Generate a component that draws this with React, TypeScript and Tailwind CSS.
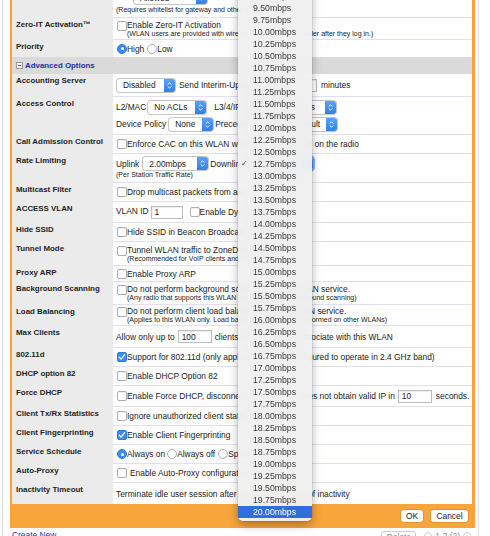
import React from "react";

function Check({ on = false, className = "" }: { on?: boolean; className?: string }) {
  if (on)
    return (
      <span
        className={
          "inline-flex h-[10px] w-[10px] shrink-0 items-center justify-center rounded-[2px] border border-[#2d7be6] bg-[#3a8df3] " +
          className
        }
      >
        <svg width="8" height="8" viewBox="0 0 8 8">
          <path d="M1.3 4.3 L3.1 6.1 L6.7 1.7" fill="none" stroke="#fff" strokeWidth="1.3" strokeLinecap="round" strokeLinejoin="round" />
        </svg>
      </span>
    );
  return (
    <span
      className={
        "inline-block h-[10px] w-[10px] shrink-0 rounded-[2px] border border-[#adadad] bg-white shadow-[inset_0_1px_1px_rgba(0,0,0,0.06)] " +
        className
      }
    />
  );
}

function Radio({ on = false, className = "" }: { on?: boolean; className?: string }) {
  if (on)
    return (
      <span
        className={
          "inline-flex h-[10px] w-[10px] shrink-0 items-center justify-center rounded-full border border-[#2d7be6] bg-[#3a8df3] " +
          className
        }
      >
        <span className="h-[3px] w-[3px] rounded-full bg-white" />
      </span>
    );
  return <span className={"inline-block h-[10px] w-[10px] shrink-0 rounded-full border border-[#adadad] bg-white " + className} />;
}

function Select({ label, className = "", focus = false }: { label: string; className?: string; focus?: boolean }) {
  return (
    <span
      className={
        "inline-flex h-[13px] shrink-0 items-stretch overflow-hidden rounded-[3px] bg-white shadow-[0_0_0_1px_#c6c6c6,0_1px_1px_rgba(0,0,0,0.1)] " +
        (focus ? "ring-2 ring-[#7fb0f3] " : "") +
        className
      }
    >
      <span className="flex flex-1 items-center whitespace-nowrap pl-[6px] leading-[10px]">{label}</span>
      <span className="flex w-[11px] items-center justify-center bg-gradient-to-b from-[#5aa2f6] to-[#2f7fec]">
        <svg width="5" height="9" viewBox="0 0 5 9">
          <path
            d="M1 3.3 L2.5 1.8 L4 3.3 M1 5.7 L2.5 7.2 L4 5.7"
            fill="none"
            stroke="#fff"
            strokeWidth="0.9"
            strokeLinecap="round"
            strokeLinejoin="round"
          />
        </svg>
      </span>
    </span>
  );
}

function Input({ value = "", className = "" }: { value?: string; className?: string }) {
  return (
    <span
      className={
        "inline-flex h-[13px] shrink-0 items-center border border-[#bdbdbd] bg-white pl-[3px] leading-[10px] shadow-[inset_0_1px_1px_rgba(0,0,0,0.08)] " +
        className
      }
    >
      {value}
    </span>
  );
}

function Row({ label, h, children, last = false }: { label: string; h: string; children: React.ReactNode; last?: boolean }) {
  return (
    <div className={"flex " + h}>
      <div className="w-[101px] shrink-0 whitespace-nowrap bg-[#ebebeb] pl-[4px] pt-[2px] text-[7.9px] font-bold leading-[10px] text-[#1e1e1e]">
        {label}
      </div>
      <div
        className={
          "flex min-w-0 flex-1 flex-col justify-center overflow-hidden bg-white pl-[3px] " + (last ? "" : "border-b border-[#e4def5]")
        }
      >
        {children}
      </div>
    </div>
  );
}

function CheckLine({ on = false, text, sub, gap = false }: { on?: boolean; text: string; sub?: string; gap?: boolean }) {
  return (
    <div className="flex items-start whitespace-nowrap">
      <Check on={on} className={sub ? "ml-px mt-[1px]" : "ml-px"} />
      <div className={gap ? "ml-[3px]" : ""}>
        <div className="leading-[10px]">{text}</div>
        {sub && <div className="text-[7px] leading-[8px]">{sub}</div>}
      </div>
    </div>
  );
}

const LINE = "flex items-center whitespace-nowrap leading-[10px]";

function Menu() {
  const items: string[] = [];
  for (let i = 0; i <= 44; i++) items.push((9 + i * 0.25).toFixed(2) + "mbps");
  return (
    <div className="absolute left-[238px] top-[-24px] w-[74px] rounded-b-[5px] bg-[#efefef]/95 pb-[3px] pt-[2px] font-['Liberation_Sans',Arial,sans-serif] shadow-[0_4px_10px_rgba(0,0,0,0.3),0_0_0_0.5px_rgba(0,0,0,0.12)] backdrop-blur-[10px]">
      {items.map((t) => {
        const sel = t === "20.00mbps";
        return (
          <div
            key={t}
            className={
              "flex h-[12px] items-center pl-[3px] text-[8.7px] leading-[12px] " +
              (sel ? "bg-[#2f6fdd] text-white" : "text-[#3a3a3a]")
            }
          >
            <span className="w-[12px] text-[8px] leading-[12px] text-[#444] font-['DejaVu_Sans',sans-serif]">
              {t === "12.75mbps" ? "✓" : ""}
            </span>
            <span>{t}</span>
          </div>
        );
      })}
    </div>
  );
}

export default function App() {
  return (
    <div className="relative h-[536px] w-[490px] overflow-hidden bg-white font-['Liberation_Sans',Arial,sans-serif] text-[8.4px] text-[#1a1a1a]">
      <div className="flex h-full">
        <div className="w-[2px]" />
        <div className="w-px bg-[#dcdcdc]" />
        <div className="w-[7px]" />
        <div className="flex w-[465px] flex-col">
          <div className="-mt-[12px] border-l-2 border-r-[3px] border-[#f8a53b] bg-white">
            <Row label="" h="h-[30px]">
              <div className={LINE + " pl-[18px]"}>
                <Select label="Allowed" className="w-[73px]" />
              </div>
              <div className="mt-[2px] whitespace-nowrap text-[7px] leading-[8px]">(Requires whitelist for gateway and other nodes)</div>
            </Row>
            <Row label="Zero-IT Activation™" h="h-[22px]">
              <CheckLine
                text="Enable Zero-IT Activation"
                sub="(WLAN users are provided with wireless configuration installer after they log in.)"
              />
            </Row>
            <Row label="Priority" h="h-[17px]" last>
              <div className={LINE}>
                <Radio on className="ml-px" />
                <span>High</span>
                <Radio className="ml-[3px]" />
                <span>Low</span>
              </div>
            </Row>
            <div className="flex h-[17px] items-center bg-[#dadada] pl-[4px]">
              <span className="flex h-[7px] w-[7px] items-center justify-center border border-[#9a9a9a] bg-[#f2f2f2]">
                <span className="h-px w-[3px] bg-[#555]" />
              </span>
              <span className="ml-[2px] text-[7.9px] font-bold leading-[10px] text-[#1f2d9c]">Advanced Options</span>
            </div>
            <Row label="Accounting Server" h="h-[23px]">
              <div className={LINE}>
                <Select label="Disabled" className="ml-px w-[58px]" />
                <span className="ml-[4px]">Send Interim-Update every</span>
                <Input value="5" className="ml-[3px] w-[35px]" />
                <span className="ml-[4px]">minutes</span>
              </div>
            </Row>
            <Row label="Access Control" h="h-[38px]">
              <div className={LINE}>
                <span>L2/MAC</span>
                <Select label="No ACLs" className="ml-[2px] w-[58px]" />
                <span className="ml-[8px]">L3/4/IP address</span>
                <Select label="No ACLs" className="ml-[3px] w-[60px]" />
              </div>
              <div className={LINE + " mt-[4px]"}>
                <span>Device Policy</span>
                <Select label="None" className="ml-[3px] w-[44px]" />
                <span className="ml-[2px]">Precedence Policy</span>
                <Select label="Default" className="ml-[3px] w-[49px]" />
              </div>
            </Row>
            <Row label="Call Admission Control" h="h-[19px]">
              <CheckLine text="Enforce CAC on this WLAN when CAC is enabled on the radio" />
            </Row>
            <Row label="Rate Limiting" h="h-[29px]">
              <div className={LINE}>
                <span>Uplink</span>
                <Select label="2.00mbps" className="ml-[4px] w-[65px]" />
                <span className="ml-[2px]">Downlink</span>
                <Select label="12.75mbps" focus className="ml-[3px] w-[66px]" />
              </div>
              <div className="mt-[1px] whitespace-nowrap text-[7px] leading-[8px]">(Per Station Traffic Rate)</div>
            </Row>
            <Row label="Multicast Filter" h="h-[19px]">
              <CheckLine text="Drop multicast packets from associated clients" />
            </Row>
            <Row label="ACCESS VLAN" h="h-[21px]">
              <div className="flex items-center whitespace-nowrap leading-[10px]">
                <span className="self-start">VLAN ID</span>
                <Input value="1" className="ml-[2px] w-[32px]" />
                <Check className="ml-[7px]" />
                <span>Enable Dynamic VLAN</span>
              </div>
            </Row>
            <Row label="Hide SSID" h="h-[19px]">
              <CheckLine text="Hide SSID in Beacon Broadcast Frames" />
            </Row>
            <Row label="Tunnel Mode" h="h-[24px]">
              <CheckLine text="Tunnel WLAN traffic to ZoneDirector" sub="(Recommended for VoIP clients and PDA devices)" />
            </Row>
            <Row label="Proxy ARP" h="h-[16px]">
              <CheckLine text="Enable Proxy ARP" />
            </Row>
            <Row label="Background Scanning" h="h-[23px]">
              <CheckLine
                text="Do not perform background scanning for this WLAN service."
                sub="(Any radio that supports this WLAN will not perform background scanning)"
              />
            </Row>
            <Row label="Load Balancing" h="h-[21px]">
              <CheckLine
                text="Do not perform client load balancing for this WLAN service."
                sub="(Applies to this WLAN only. Load balancing may still be performed on other WLANs)"
              />
            </Row>
            <Row label="Max Clients" h="h-[22px]">
              <div className={LINE}>
                <span>Allow only up to</span>
                <Input value="100" className="ml-[3px] w-[34px]" />
                <span className="ml-[3px]">clients per AP radio to associate with this WLAN</span>
              </div>
            </Row>
            <Row label="802.11d" h="h-[19px]">
              <CheckLine on text="Support for 802.11d (only applicable to APs configured to operate in 2.4 GHz band)" />
            </Row>
            <Row label="DHCP option 82" h="h-[19px]">
              <CheckLine text="Enable DHCP Option 82" />
            </Row>
            <Row label="Force DHCP" h="h-[21px]">
              <div className={LINE}>
                <Check className="ml-px" />
                <span>Enable Force DHCP, disconnect client if client does not obtain valid IP in</span>
                <Input value="10" className="ml-[3px] w-[34px]" />
                <span className="ml-[4px]">seconds.</span>
              </div>
            </Row>
            <Row label="Client Tx/Rx Statistics" h="h-[19px]">
              <CheckLine text="Ignore unauthorized client statistics" />
            </Row>
            <Row label="Client Fingerprinting" h="h-[19px]">
              <CheckLine on text="Enable Client Fingerprinting" />
            </Row>
            <Row label="Service Schedule" h="h-[19px]">
              <div className={LINE}>
                <Radio on className="ml-px" />
                <span>Always on</span>
                <Radio className="ml-[2px]" />
                <span>Always off</span>
                <Radio className="ml-[3px]" />
                <span>Specific</span>
              </div>
            </Row>
            <Row label="Auto-Proxy" h="h-[19px]">
              <CheckLine gap text="Enable Auto-Proxy configuration" />
            </Row>
            <Row label="Inactivity Timeout" h="h-[21px]" last>
              <div className={LINE}>
                <span>Terminate idle user session after</span>
                <Input value="5" className="ml-[3px] w-[34px]" />
                <span className="ml-[3px]">minutes of inactivity</span>
              </div>
            </Row>
            <div className="flex h-[24px] items-center justify-end gap-[8px] bg-[#f8a53b] pr-[4px]">
              <span className="flex h-[12px] w-[22px] items-center justify-center rounded-[3px] bg-white leading-[10px] shadow-[0_0_0_0.5px_rgba(0,0,0,0.2)]">
                OK
              </span>
              <span className="flex h-[12px] w-[37px] items-center justify-center rounded-[3px] bg-white leading-[10px] shadow-[0_0_0_0.5px_rgba(0,0,0,0.2)]">
                Cancel
              </span>
            </div>
          </div>
          <div className="flex items-start justify-between pl-[2px] pt-[2px]">
            <span className="leading-[10px] text-[#22399b]">Create New</span>
            <div className="flex items-start gap-[8px] pr-[4px] pt-px">
              <span className="flex h-[12px] w-[35px] items-center justify-center rounded-[3px] border border-[#d0d0d0] leading-[10px] text-[#888]">
                Delete
              </span>
              <div className="flex items-center gap-[3px] text-[#888] leading-[10px]">
                <span className="h-[8px] w-[8px] rounded-full border border-[#cfcfcf]" />
                <span>1-2 (2)</span>
                <span className="h-[8px] w-[8px] rounded-full border border-[#cfcfcf]" />
              </div>
            </div>
          </div>
        </div>
        <div className="w-[3px]" />
        <div className="w-px bg-[#e6e0f6]" />
      </div>
      <Menu />
    </div>
  );
}
